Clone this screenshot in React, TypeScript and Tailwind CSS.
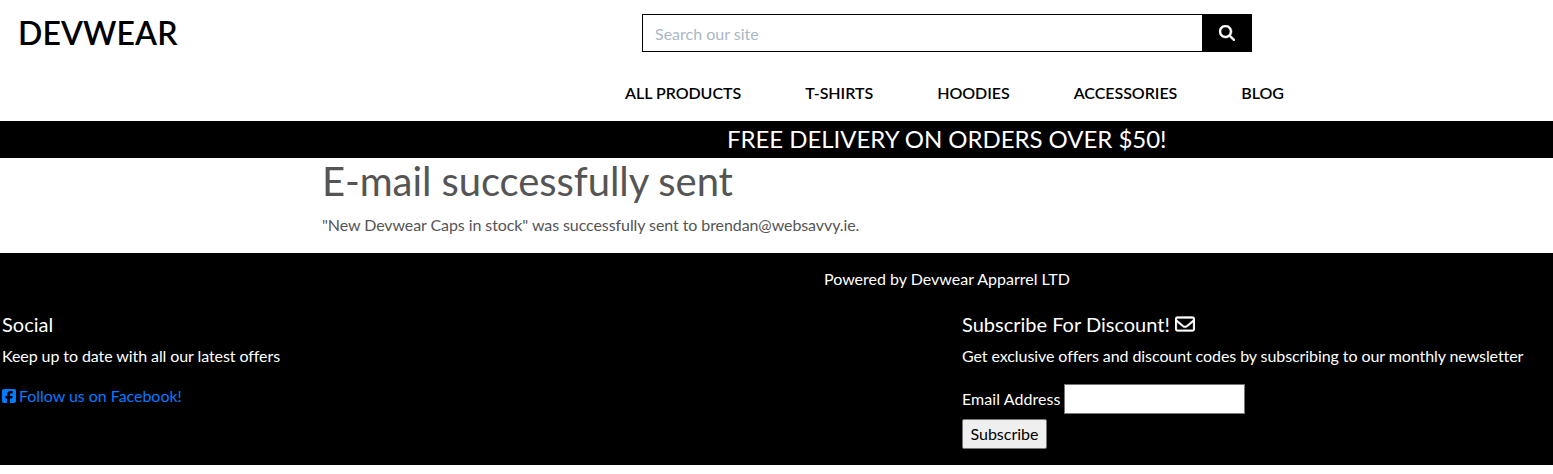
import { FaMagnifyingGlass, FaRegEnvelope, FaSquareFacebook } from "react-icons/fa6";

const links = ["ALL PRODUCTS", "T-SHIRTS", "HOODIES", "ACCESSORIES", "BLOG"];

export default function App() {
  return (
    <div className="h-[474px] w-full overflow-hidden bg-white font-['Lato',sans-serif] text-base leading-6 text-[#555]">
      <header className="h-[121px] text-black">
        <div className="flex h-[66px] items-start">
          <h1 className="w-[642px] pl-[18px] pt-[13px] text-[32px] font-semibold leading-10 tracking-[0.1px]">DEVWEAR</h1>
          <form className="mt-[14px] flex h-[38px] w-[610px]">
            <input placeholder="Search our site" className="min-w-0 flex-1 border border-black px-3 pt-px outline-none placeholder:text-[#aab7c4]" />
            <button type="button" className="flex w-[49px] items-center justify-center bg-black pr-[2px] text-white"><FaMagnifyingGlass size={16} strokeWidth={16} className="stroke-current" /></button>
          </form>
        </div>
        <nav className="flex gap-16 pl-[625px] pt-[15px] font-semibold tracking-[-0.03px]">
          {links.map((l) => <a key={l}>{l}</a>)}
        </nav>
      </header>
      <div className="h-[37px] bg-black pl-[727px] pt-[3px] text-2xl leading-[30px] tracking-[-0.04px] text-white">FREE DELIVERY ON ORDERS OVER $50!</div>
      <main className="flex h-[95px] flex-col pl-[322px]">
        <h2 className="h-[47px] text-[40px] leading-[46px] tracking-[-0.08px]">E-mail successfully sent</h2>
        <p className="pt-2 tracking-[-0.085px]">"New Devwear Caps in stock" was successfully sent to brendan@websavvy.ie.</p>
      </main>
      <footer className="h-[212px] bg-black text-white">
        <p className="pl-[824px] pt-[14px]">Powered by Devwear Apparrel LTD</p>
        <div className="flex pt-[21px]">
          <section className="w-[960px] pl-[2px]">
            <h3 className="text-xl leading-6">Social</h3>
            <p className="mt-2 tracking-[-0.08px]">Keep up to date with all our latest offers</p>
            <a className="mt-4 flex items-center gap-[3px] tracking-[-0.04px] text-[#007bff]"><FaSquareFacebook className="h-4 w-[14px]" />Follow us on Facebook!</a>
          </section>
          <section className="pl-[2px]">
            <h3 className="flex items-center gap-[5px] text-xl leading-6">Subscribe For Discount! <FaRegEnvelope size={20} strokeWidth={8} className="stroke-current" /></h3>
            <p className="mt-2 tracking-[-0.08px]">Get exclusive offers and discount codes by subscribing to our monthly newsletter</p>
            <label className="mt-4 flex h-[30px] items-center gap-[3px]"><span className="w-[99px] tracking-[0.06px]">Email Address</span><input className="h-[30px] w-[181px] border border-[#767676] bg-white" /></label>
            <button type="button" className="mt-[5px] block h-[30px] w-[85px] rounded-[2px] border border-[#767676] bg-[#efefef] text-black">Subscribe</button>
          </section>
        </div>
      </footer>
    </div>
  );
}
